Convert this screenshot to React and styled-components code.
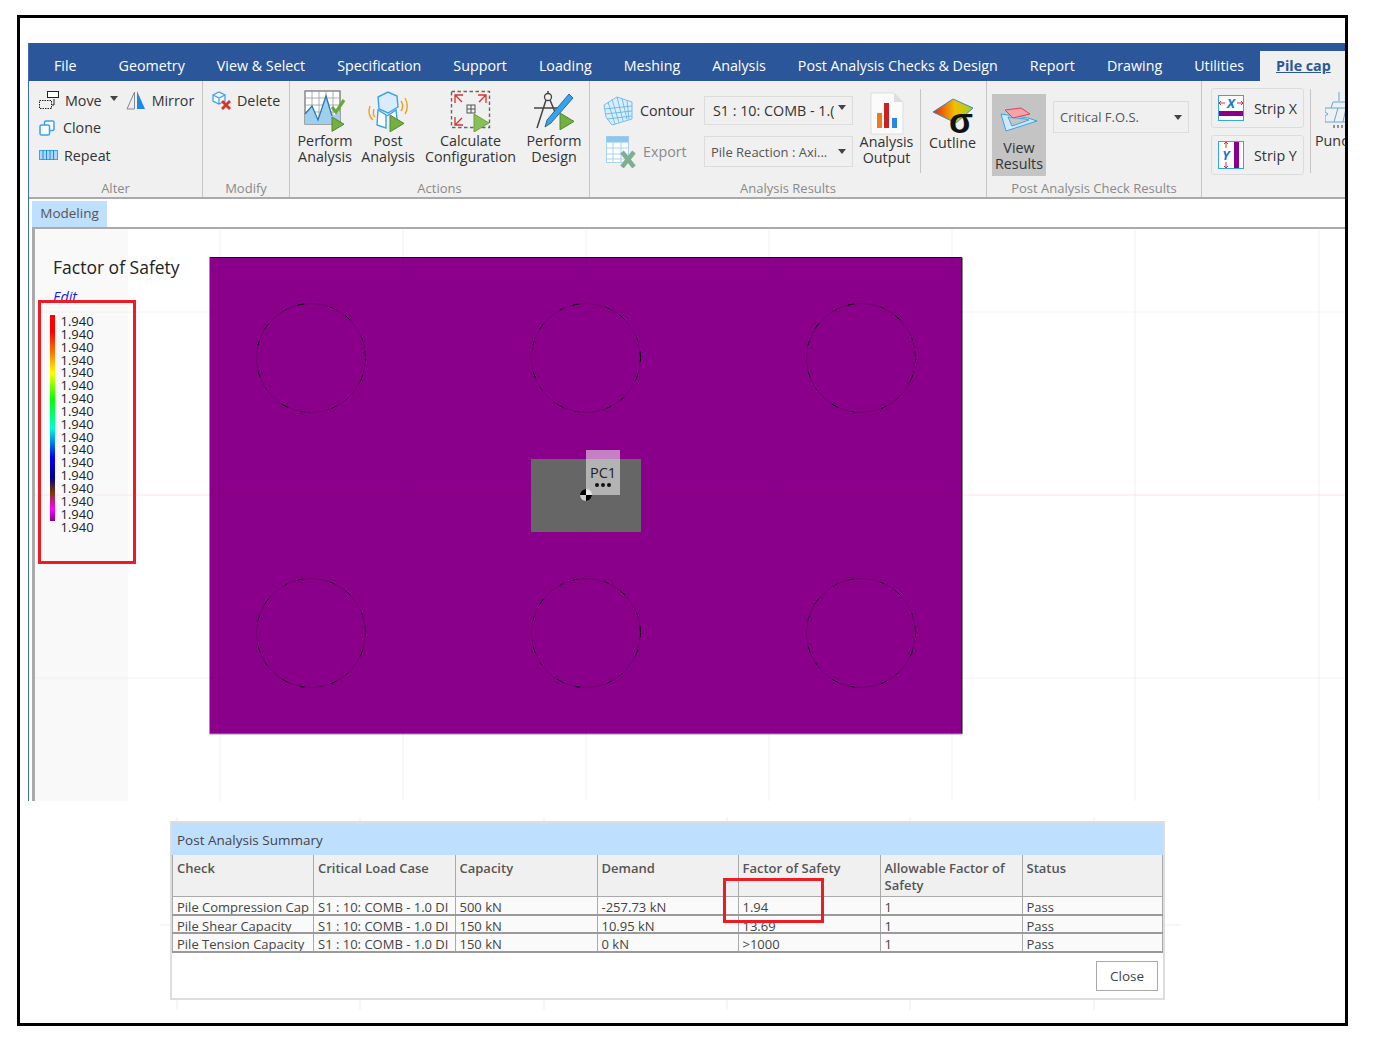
import React from 'react';
import styled, { createGlobalStyle } from 'styled-components';

const GlobalStyle = createGlobalStyle`
  html, body { margin: 0; padding: 0; background: #fff; }
  body { font-family: "Open Sans", "Noto Sans", sans-serif; font-size: 14.3px; color: #333; }
  * { box-sizing: border-box; }
`;

const Frame = styled.div`
  width: 1331px;
  height: 1011px;
  margin: 15px 0 0 17px;
  border: 3px solid #000;
  overflow: hidden;
`;

const AppWindow = styled.div`
  width: 1320px;
  margin: 25px 0 0 8px;
  border-left: 1px solid #3f6cb0;
`;

const TabBar = styled.div`
  display: flex;
  align-items: flex-end;
  height: 38px;
  background: #2b579a;
  padding-left: 9px;
  font-size: 14.27px;
`;

const Tab = styled.div`
  padding: 0 16px;
  margin-right: ${p => p.$gap || 0}px;
  height: 30px;
  line-height: 30px;
  color: #fff;
  white-space: nowrap;
  ${p => p.$active && `
    flex: 1;
    background: #f0f0f0;
    color: #2b579a;
    font-weight: 700;
    text-decoration: underline;
  `}
`;

const Ribbon = styled.div`
  display: flex;
  height: 118px;
  background: #f0f0f0;
  border-bottom: 2px solid #aaa;
`;

const Group = styled.div`
  display: flex;
  flex-direction: column;
  flex: ${p => (p.$width ? `0 0 ${p.$width}px` : 1)};
  border-right: ${p => (p.$width ? '1px solid #c6c6c6' : 'none')};
  min-width: 0;
`;

const GroupBody = styled.div`
  flex: 0 0 97px;
  display: flex;
  overflow: hidden;
`;

const GroupLabel = styled.div`
  height: 19px;
  line-height: 20px;
  text-align: center;
  color: #8a8a8a;
  font-size: 13px;
`;

const SmallStack = styled.div`
  display: flex;
  flex-direction: column;
  gap: 7.5px;
  padding: 9px 0 0 ${p => p.$left || 10}px;
`;

const SmallItem = styled.div`
  display: flex;
  align-items: center;
  gap: ${p => p.$gap || 6}px;
  height: 20px;
  white-space: nowrap;
`;

const Caret = styled.span`
  width: 0;
  height: 0;
  margin-bottom: ${p => p.$up || 0}px;
  border-left: 4px solid transparent;
  border-right: 4px solid transparent;
  border-top: 5px solid #444;
  flex: none;
`;

const MoveCaret = styled(Caret)`
  margin: 0 2px 4px;
`;

const BigRow = styled.div`
  display: flex;
  gap: 10px;
  padding: 9px 0 0 8px;
`;

const BigButton = styled.div`
  flex: 0 0 ${p => p.$width}px;
  min-width: 0;
  display: flex;
  flex-direction: column;
  align-items: center;
  padding-top: ${p => p.$top || 0}px;
  line-height: 16px;
  text-align: center;
  white-space: nowrap;
`;

const IconSlot = styled.div`
  height: ${p => p.$height || 43}px;
  display: flex;
  align-items: flex-start;
  justify-content: center;
`;

const ResultsGrid = styled.div`
  display: grid;
  grid-template-columns: 101px 149px;
  grid-template-rows: 29px 31px;
  row-gap: 11px;
  align-items: center;
  padding: 15px 0 0 13px;
`;

const IconLabel = styled.div`
  display: flex;
  align-items: center;
  gap: 7px;
  color: ${p => (p.$disabled ? '#8a8a8a' : '#333')};
`;

const Select = styled.div`
  display: flex;
  align-items: center;
  justify-content: space-between;
  width: ${p => p.$width || 149}px;
  height: 100%;
  padding: 0 6px 0 ${p => p.$left || 7}px;
  border: 1px solid #dcdcdc;
  color: ${p => (p.$dark ? '#333' : '#555')};
  white-space: nowrap;
  overflow: hidden;
  font-size: ${p => p.$size || 13}px;
`;

const SelectText = styled.span`
  overflow: hidden;
`;

const Divider = styled.div`
  flex: 0 0 1px;
  width: 1px;
  height: 84px;
  margin: 8px 0 0 ${p => p.$left || 0}px;
  background: #c6c6c6;
`;

const ViewResults = styled(BigButton)`
  flex: 0 0 54px;
  height: 82px;
  margin: 13px 0 0 5px;
  padding-top: 13px;
  background: #c4c4c4;
`;

const PostSelectSlot = styled.div`
  height: 32px;
  margin: 20px 0 0 7px;
`;

const StripStack = styled.div`
  display: flex;
  flex-direction: column;
  gap: 7px;
  padding: 7px 0 0 9px;
`;

const StripButton = styled.div`
  display: flex;
  align-items: center;
  gap: 10px;
  width: 93px;
  height: 40px;
  padding-left: 6px;
  border: 1px solid #dcdcdc;
  border-radius: 3px;
`;

const PunchButton = styled.div`
  flex: none;
  width: 60px;
  padding: 11px 0 0 4px;
  line-height: 16px;
`;

const PunchIcon = styled.div`
  height: 41px;
  padding-left: 10px;
`;

const ModelStrip = styled.div`
  height: 28px;
  padding: 2px 0 0 3px;
  background: #fff;
`;

const ModelTab = styled.div`
  width: 75px;
  height: 26px;
  line-height: 25px;
  text-align: center;
  background: #bfdfff;
  color: #555;
  font-size: 13.5px;
`;

const Canvas = styled.div`
  position: relative;
  height: 574px;
  margin-left: 3px;
  border-top: 2px solid #aaa;
  border-left: 3px solid #aaa;
`;

const Drawing = styled.svg`
  position: absolute;
  inset: 0;
`;

const LegendPanel = styled.div`
  position: relative;
  width: 93px;
  height: 100%;
  padding: 26px 0 0 15px;
  background: rgba(240, 240, 240, 0.42);
`;

const LegendTitle = styled.div`
  margin-left: 3px;
  font-size: 17.5px;
  line-height: 24px;
  color: #222;
  white-space: nowrap;
`;

const LegendEdit = styled.div`
  margin: 9px 0 9px 3px;
  line-height: 18px;
  font-style: italic;
  color: #1a1aee;
`;

const LegendScale = styled.div`
  display: flex;
  align-items: flex-start;
  gap: 5.5px;
`;

const ColorBar = styled.div`
  width: 5px;
  height: 206px;
  background: linear-gradient(
    #f00 0%, #f00 8%, #ff8000 19%, #ff0 28%, #0f0 41%, #00ffd0 55%, #00f 69%,
    #00008b 79%, #7a3b00 86%, #f0f 94%, #8b008b 100%
  );
`;

const LegendValues = styled.div`
  font-size: 13px;
  line-height: 12.85px;
  color: #222;
`;

const Annotation = styled.div`
  position: absolute;
  left: ${p => p.$x}px;
  top: ${p => p.$y}px;
  width: ${p => p.$w}px;
  height: ${p => p.$h}px;
  border: 3px solid #ed1c24;
`;

const NodeBadge = styled.div`
  position: absolute;
  left: 551px;
  top: 221px;
  width: 34px;
  height: 45px;
  padding-top: 14px;
  background: rgba(255, 255, 255, 0.5);
  text-align: center;
  color: #222;
  font-size: 14.5px;
  line-height: 18px;
`;

const BadgeDots = styled.div`
  display: flex;
  justify-content: center;
  gap: 2px;
  margin-top: 1px;
`;

const Dot = styled.span`
  width: 4px;
  height: 4px;
  border-radius: 50%;
  background: #111;
`;

const DialogArea = styled.div`
  position: relative;
  margin-top: 20px;
  padding-left: 150px;
`;

const BackLines = styled.svg`
  position: absolute;
  left: 0;
  top: -10px;
`;

const Dialog = styled.div`
  position: relative;
  width: 995px;
  height: 179px;
  border: 2px solid #ddd;
  background: #fff;
`;

const DialogTitle = styled.div`
  height: 32px;
  padding: 2px 0 0 5px;
  line-height: 31px;
  font-size: 13.5px;
  background: #bfdfff;
  color: #444;
`;

const Row = styled.div`
  display: grid;
  grid-template-columns: 141px 141.5px 142px 141px 142px 142px 1fr;
  height: ${p => p.$height}px;
  background: ${p => (p.$head ? '#f0f0f0' : '#fafafa')};
  border-bottom: ${p => (p.$head ? '1px solid #aaa' : '2px solid #9a9a9a')};
`;

const Cell = styled.div`
  padding: ${p => (p.$head ? '5px' : '2px')} 4px 0;
  border-left: 1px solid #aaa;
  border-right: ${p => (p.$last ? '1px solid #aaa' : 'none')};
  line-height: 17px;
  font-weight: ${p => (p.$head ? 600 : 400)};
  font-size: 13px;
  color: ${p => (p.$head ? '#555' : '#444')};
  overflow: hidden;
  white-space: ${p => (p.$head ? 'normal' : 'nowrap')};
`;

const DialogFooter = styled.div`
  display: flex;
  justify-content: flex-end;
  padding: 8px 5px 0 0;
`;

const CloseButton = styled.div`
  width: 62px;
  height: 30px;
  line-height: 28px;
  text-align: center;
  border: 1px solid #aaa;
  color: #444;
  font-size: 13.5px;
`;

const BLUE = '#37a3ee';

const Play = ({ x, y, s = 16 }) => (
  <path d={`M${x} ${y}l${s} ${s * 0.6}-${s} ${s * 0.6}z`} fill="#74b041" stroke="#4f8a2a" strokeWidth="1" />
);

const MoveIcon = () => (
  <svg width="20" height="20" viewBox="0 0 20 20">
    <rect x="0.5" y="10.5" width="12" height="8" fill="none" stroke="#222" strokeDasharray="1.5 1" />
    <rect x="8.5" y="1.5" width="11" height="6" fill="#fff" stroke="#222" />
    <path d="M15 9v6M13 15h2" stroke="#222" fill="none" />
  </svg>
);

const MirrorIcon = () => (
  <svg width="20" height="20" viewBox="0 0 20 20">
    <path d="M8.5 2L1 19h7.5z" fill="#eee" stroke="#888" />
    <path d="M11 1l8 18h-8z" fill="#1e88e5" />
  </svg>
);

const CloneIcon = () => (
  <svg width="16" height="16" viewBox="0 0 16 16" fill="#fff" stroke={BLUE} strokeWidth="1.5">
    <rect x="5.5" y="1" width="9.5" height="9.5" rx="1.5" />
    <rect x="1" y="5" width="9.5" height="10" rx="1.5" />
  </svg>
);

const RepeatIcon = () => (
  <svg width="19" height="10" viewBox="0 0 19 10">
    <rect x="0.5" y="0.5" width="18" height="9" fill="#a8d8fa" stroke={BLUE} />
    <path d="M4 0v10M7.5 0v10M11 0v10M14.5 0v10" stroke="#1e88e5" />
  </svg>
);

const DeleteIcon = () => (
  <svg width="21" height="21" viewBox="0 0 21 21">
    <path d="M1 5l6-3 6 3v6l-6 3-6-3zM1 5l6 3 6-3M7 8v6" fill="#fff" stroke={BLUE} strokeWidth="1.3" />
    <path d="M10 11l8 8M18 11l-8 8" stroke="#d9312b" strokeWidth="2.8" />
  </svg>
);

const PerformAnalysisIcon = () => (
  <svg width="42" height="42" viewBox="0 0 42 42">
    <rect x="1" y="1" width="35" height="33" fill="#fff" stroke="#777" strokeWidth="1.3" />
    <path d="M8 1v33M15 1v33M22 1v33M29 1v33M1 8h35M1 15h35M1 22h35M1 28h35" stroke="#999" strokeWidth="0.8" />
    <path d="M1 24L8 16l6 14 8-24 6 20 8-4v12H1z" fill="#9ed0ee" />
    <path d="M1 24L8 16l6 14 8-24 6 20" fill="none" stroke="#2a78b5" strokeWidth="1.3" />
    <path d="M28 17l4 5 8-12" fill="none" stroke="#68a83a" strokeWidth="3.2" />
    <Play x={28} y={27} s={12} />
  </svg>
);

const PostAnalysisIcon = () => (
  <svg width="42" height="42" viewBox="0 0 42 42">
    <path d="M3 16c-2 5-1 11 3 14M7 19c-1 3-1 6 1 8M38 8c3 5 3 12 0 16M34 11c2 3 2 7 0 10" fill="none" stroke="#f0a020" strokeWidth="1.4" />
    <path d="M11 7l10-5 9 4 1 11-10 6-9-4z" fill="#d8ecfb" stroke={BLUE} strokeWidth="1.4" />
    <path d="M11 20l8 5v13l-9-3zM20 26l9-6 1 9" fill="#fff" stroke={BLUE} strokeWidth="1.4" />
    <Play x={23} y={25} s={14} />
  </svg>
);

const CalculateIcon = () => (
  <svg width="42" height="42" viewBox="0 0 42 42">
    <rect x="1.5" y="1.5" width="38" height="36" fill="none" stroke="#666" strokeWidth="1.4" strokeDasharray="3.5 2.5" />
    <path d="M5 13V5h8M5 5l7 7M36 13V5h-8M36 5l-7 7M5 27v8h8M5 35l7-7" fill="none" stroke="#d9312b" strokeWidth="1.3" />
    <rect x="17" y="15" width="8" height="8" fill="none" stroke="#555" />
    <path d="M21 15v8M17 19h8" stroke="#555" />
    <path d="M24 24l15 9-15 9z" fill="#8abf58" stroke="#6ea040" />
  </svg>
);

const DesignIcon = () => (
  <svg width="42" height="42" viewBox="0 0 42 42">
    <circle cx="15" cy="7" r="3.5" fill="none" stroke="#444" strokeWidth="1.3" />
    <path d="M15 1v3M13 10L4 38M17 10l5 12M1 18h24" fill="none" stroke="#444" strokeWidth="1.5" />
    <path d="M36 4l4 4-22 25-6 4 2-7z" fill={BLUE} stroke="#22608f" strokeWidth="0.9" />
    <Play x={27} y={23} s={14} />
  </svg>
);

const ContourIcon = () => (
  <svg width="30" height="30" viewBox="0 0 30 30" fill="none" stroke="#5cb0e8" strokeWidth="0.8">
    <path d="M1 9L14 1l15 5v17L9 29 3 21z" fill="#d9eefb" />
    <path d="M5 6l7 22M9 3.500l7 23M14 1l6 24M19 2.500l5 21M24 4.500l2 19M1.500 13L29 10M2.500 18L29 15M4 23l25-3" />
  </svg>
);

const ExportIcon = () => (
  <svg width="33" height="32" viewBox="-3 0 33 32">
    <rect x="0.5" y="0.5" width="22" height="26" fill="#fff" stroke="#a8d2ef" />
    <rect x="0.5" y="0.5" width="22" height="6" fill="#8cc6ee" />
    <path d="M7 6v21M15 6v21M1 12h22M1 18h22M1 23h22" stroke="#a8d2ef" />
    <path d="M16 16l12 15M28 16L16 31" stroke="#7fae90" strokeWidth="4.500" />
  </svg>
);

const OutputIcon = () => (
  <svg width="34" height="43" viewBox="0 0 34 43">
    <path d="M1 1h23l9 9v32H1z" fill="#fbfbfb" stroke="#ddd" />
    <path d="M24 1v9h9z" fill="#ddd" />
    <rect x="7" y="21" width="5" height="15" fill="#ed7a1c" />
    <rect x="14" y="11" width="5" height="25" fill="#cf1f1f" />
    <rect x="22" y="26" width="5" height="10" fill="#2b86e0" />
  </svg>
);

const CutlineIcon = () => (
  <svg width="42" height="37" viewBox="0 0 42 37">
    <defs>
      <linearGradient id="cutFill" x1="0" y1="0" x2="1" y2="0">
        <stop offset="0" stopColor="#e82010" />
        <stop offset="0.55" stopColor="#f0c000" />
        <stop offset="1" stopColor="#a0d020" />
      </linearGradient>
    </defs>
    <path d="M1 14L21 1l20 9-17 15z" fill="url(#cutFill)" stroke="#3a8ad0" />
    <text x="29" y="35" textAnchor="middle" fontSize="35" fontWeight="700" fill="#111" fontFamily="Liberation Sans, sans-serif">σ</text>
  </svg>
);

const ViewResultsIcon = () => (
  <svg width="38" height="25" viewBox="0 0 38 25">
    <path d="M1 7l27 4 9 3-31 10z" fill="#cfe8fb" stroke={BLUE} />
    <path d="M8 10l17 2 4 1-17 6z" fill="#c4c4c4" stroke={BLUE} />
    <path d="M5 3l16-2 9 6-17 4z" fill="#f6a2a6" stroke="#d9464c" />
  </svg>
);

const StripXIcon = () => (
  <svg width="26" height="26" viewBox="0 0 26 26">
    <rect x="0.500" y="0.500" width="25" height="25" fill="#fff" stroke={BLUE} />
    <rect x="1" y="16" width="24" height="5" fill="#8b008b" />
    <path d="M1 8h6M3 6L1 8l2 2M25 8h-6M23 6l2 2-2 2" fill="none" stroke="#d9312b" />
    <text x="13" y="13" textAnchor="middle" fontSize="13" fontWeight="700" fontStyle="italic" fill="#1e78d0" fontFamily="Open Sans, sans-serif">X</text>
  </svg>
);

const StripYIcon = () => (
  <svg width="26" height="28" viewBox="0 0 26 28">
    <rect x="0.500" y="0.500" width="25" height="27" fill="#fff" stroke={BLUE} />
    <rect x="16" y="1" width="5" height="26" fill="#8b008b" />
    <path d="M8 1v6M6 3l2-2 2 2M8 27v-6M6 25l2 2 2-2" fill="none" stroke="#d9312b" />
    <text x="8" y="19" textAnchor="middle" fontSize="13" fontWeight="700" fontStyle="italic" fill="#1e78d0" fontFamily="Open Sans, sans-serif">Y</text>
  </svg>
);

const PunchingIcon = () => (
  <svg width="24" height="40" viewBox="0 0 24 40" fill="none" stroke="#5aa8e0" strokeWidth="1">
    <path d="M8 10h16M0 16h24M0 30h24M8 10l-2 6M14 0v9M0 16v4l3 2-3 2v6M13 16l-4 14M21 16l-3 14" />
    <path d="M9 33v3M13 33v3M17 33v3" stroke="#333" />
  </svg>
);

const GRID_X = [220, 403, 586, 769, 952, 1135, 1319];
const PILES = [311, 586, 861].flatMap(x => [358, 633].map(y => ({ x, y })));

const ModelDrawing = () => (
  <Drawing width="1311" height="572" viewBox="35 229 1311 572">
    <rect x="210" y="257.500" width="752" height="476.500" fill="#8b008b" />
    <path d="M210 257.500H962V734" fill="none" stroke="#111" />
    <path d="M209.500 257V734H962" fill="none" stroke="#a98aa9" />
    {GRID_X.map(x => (
      <line key={x} x1={x} x2={x} y1="230" y2="801" stroke="#000" strokeOpacity="0.055" />
    ))}
    {[312, 678].map(y => (
      <line key={y} x1="35" x2="1346" y1={y} y2={y} stroke="#000" strokeOpacity="0.05" />
    ))}
    <line x1="35" x2="1346" y1="495" y2="495" stroke="#c00" strokeOpacity="0.1" />
    {PILES.map(p => (
      <g key={`${p.x}-${p.y}`} fill="none">
        <circle cx={p.x} cy={p.y} r="54.500" stroke="#5e005e" strokeWidth="0.7" />
        <circle cx={p.x} cy={p.y} r="54.500" stroke="#000" strokeWidth="1" strokeDasharray="4 13 7 21 3 11 6 27" />
      </g>
    ))}
    <rect x="531" y="459" width="110" height="73" fill="#666" />
    <circle cx="586" cy="495" r="6" fill="#ccc" />
    <path d="M586 495V489A6 6 0 0 0 580 495ZM586 495V501A6 6 0 0 0 592 495Z" fill="#000" />
  </Drawing>
);

const LEGEND_VALUES = Array.from({ length: 17 }, () => '1.940');

const TABLE_HEAD = ['Check', 'Critical Load Case', 'Capacity', 'Demand', 'Factor of Safety', 'Allowable Factor of Safety', 'Status'];
const TABLE_ROWS = [
  ['Pile Compression Cap', 'S1 : 10: COMB - 1.0 DI', '500 kN', '-257.73 kN', '1.94', '1', 'Pass'],
  ['Pile Shear Capacity', 'S1 : 10: COMB - 1.0 DI', '150 kN', '10.95 kN', '13.69', '1', 'Pass'],
  ['Pile Tension Capacity', 'S1 : 10: COMB - 1.0 DI', '150 kN', '0 kN', '>1000', '1', 'Pass'],
];

const TABS = ['Geometry', 'View & Select', 'Specification', 'Support', 'Loading', 'Meshing', 'Analysis', 'Post Analysis Checks & Design', 'Report', 'Drawing', 'Utilities'];

const App = () => (
  <>
    <GlobalStyle />
    <Frame>
      <AppWindow>
        <TabBar>
          <Tab $gap={10}>File</Tab>
          {TABS.map(t => <Tab key={t}>{t}</Tab>)}
          <Tab $active>Pile cap</Tab>
        </TabBar>

        <Ribbon>
          <Group $width={174}>
            <GroupBody>
              <SmallStack>
                <SmallItem>
                  <MoveIcon />
                  Move
                  <MoveCaret />
                  <MirrorIcon />
                  Mirror
                </SmallItem>
                <SmallItem $gap={8}><CloneIcon />Clone</SmallItem>
                <SmallItem><RepeatIcon />Repeat</SmallItem>
              </SmallStack>
            </GroupBody>
            <GroupLabel>Alter</GroupLabel>
          </Group>

          <Group $width={87}>
            <GroupBody>
              <SmallStack $left={9}>
                <SmallItem $gap={4}><DeleteIcon />Delete</SmallItem>
              </SmallStack>
            </GroupBody>
            <GroupLabel>Modify</GroupLabel>
          </Group>

          <Group $width={300}>
            <GroupBody>
              <BigRow>
                <BigButton $width={54}><IconSlot><PerformAnalysisIcon /></IconSlot>Perform<br />Analysis</BigButton>
                <BigButton $width={52}><IconSlot><PostAnalysisIcon /></IconSlot>Post<br />Analysis</BigButton>
                <BigButton $width={93}><IconSlot><CalculateIcon /></IconSlot>Calculate<br />Configuration</BigButton>
                <BigButton $width={54}><IconSlot><DesignIcon /></IconSlot>Perform<br />Design</BigButton>
              </BigRow>
            </GroupBody>
            <GroupLabel>Actions</GroupLabel>
          </Group>

          <Group $width={397}>
            <GroupBody>
              <ResultsGrid>
                <IconLabel><ContourIcon />Contour</IconLabel>
                <Select $size={14.3} $left={8} $dark><SelectText>S1 : 10: COMB - 1.(</SelectText><Caret $up={6} /></Select>
                <IconLabel $disabled><ExportIcon />Export</IconLabel>
                <Select $left={6}><SelectText>Pile Reaction : Axi...</SelectText><Caret /></Select>
              </ResultsGrid>
              <BigButton $width={67} $top={11}><IconSlot $height={42}><OutputIcon /></IconSlot>Analysis<br />Output</BigButton>
              <Divider />
              <BigButton $width={63} $top={17}><IconSlot $height={37}><CutlineIcon /></IconSlot>Cutline</BigButton>
            </GroupBody>
            <GroupLabel>Analysis Results</GroupLabel>
          </Group>

          <Group $width={215}>
            <GroupBody>
              <ViewResults><IconSlot $height={33}><ViewResultsIcon /></IconSlot>View<br />Results</ViewResults>
              <PostSelectSlot>
                <Select $width={136} $left={6}><SelectText>Critical F.O.S.</SelectText><Caret /></Select>
              </PostSelectSlot>
            </GroupBody>
            <GroupLabel>Post Analysis Check Results</GroupLabel>
          </Group>

          <Group>
            <GroupBody>
              <StripStack>
                <StripButton><StripXIcon />Strip X</StripButton>
                <StripButton><StripYIcon />Strip Y</StripButton>
              </StripStack>
              <Divider $left={6} />
              <PunchButton>
                <PunchIcon><PunchingIcon /></PunchIcon>
                Punching
              </PunchButton>
            </GroupBody>
          </Group>
        </Ribbon>

        <ModelStrip><ModelTab>Modeling</ModelTab></ModelStrip>

        <Canvas>
          <ModelDrawing />
          <LegendPanel>
            <LegendTitle>Factor of Safety</LegendTitle>
            <LegendEdit>Edit</LegendEdit>
            <LegendScale>
              <ColorBar />
              <LegendValues>
                {LEGEND_VALUES.map((v, i) => <div key={i}>{v}</div>)}
              </LegendValues>
            </LegendScale>
          </LegendPanel>
          <NodeBadge>
            PC1
            <BadgeDots><Dot /><Dot /><Dot /></BadgeDots>
          </NodeBadge>
          <Annotation $x={3} $y={71} $w={98} $h={264} />
        </Canvas>
      </AppWindow>

      <DialogArea>
        <BackLines width="1200" height="200" viewBox="20 811 1200 200">
          {[177, 360, 544, 727, 910, 1094].map(x => (
            <line key={x} x1={x} x2={x} y1="817" y2="1010" stroke="#000" strokeOpacity="0.07" />
          ))}
          <line x1="160" x2="1180" y1="925" y2="925" stroke="#000" strokeOpacity="0.07" />
        </BackLines>
        <Dialog>
          <DialogTitle>Post Analysis Summary</DialogTitle>
          <Row $head $height={42}>
            {TABLE_HEAD.map((h, i) => <Cell key={h} $head $last={i === 6}>{h}</Cell>)}
          </Row>
          {TABLE_ROWS.map((row, r) => (
            <Row key={r} $height={18.700}>
              {row.map((c, i) => <Cell key={i} $last={i === 6}>{c}</Cell>)}
            </Row>
          ))}
          <DialogFooter><CloseButton>Close</CloseButton></DialogFooter>
          <Annotation $x={551} $y={55} $w={101} $h={45} />
        </Dialog>
      </DialogArea>
    </Frame>
  </>
);

export default App;
